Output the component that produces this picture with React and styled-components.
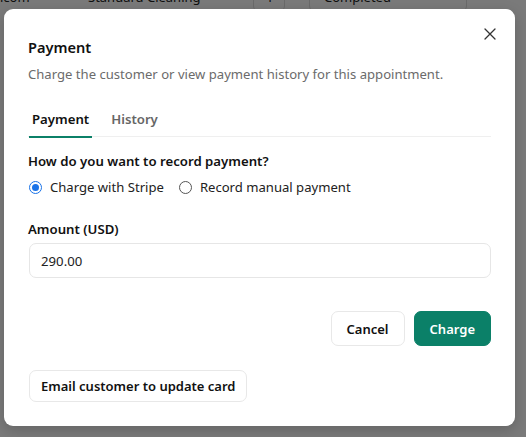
import React, { useState } from "react";
import styled, { createGlobalStyle } from "styled-components";

const Global = createGlobalStyle`
  html, body { margin: 0; padding: 0; }
  body {
    width: 526px; height: 437px; overflow: hidden;
    font-family: "Noto Sans", "Open Sans", sans-serif;
    background: #ffffff;
  }
  * { box-sizing: border-box; }
`;

const Page = styled.div`
  position: relative;
  width: 526px;
  height: 437px;
  overflow: hidden;
  background: #ffffff;
`;

const BgRow = styled.div`
  display: flex;
  align-items: center;
  height: 30px;
  margin-top: -18px;
  font-size: 13px;
  color: #222;
`;

const BgCell = styled.div`
  width: ${(p) => p.$w}px;
  flex: none;
  display: flex;
  align-items: center;
`;

const BgBox = styled.div`
  height: 30px;
  width: ${(p) => p.$w}px;
  border: 1px solid #ddd;
  border-radius: 6px;
  padding-left: ${(p) => p.$pad}px;
  display: flex;
  align-items: center;
`;

const Overlay = styled.div`
  position: absolute;
  inset: 0;
  background: rgba(0, 0, 0, 0.52);
`;

const Dialog = styled.div`
  position: absolute;
  left: 4px;
  top: 9px;
  width: 511px;
  height: 417px;
  background: #fff;
  border-radius: 9px;
  box-shadow: 0 4px 14px rgba(0, 0, 0, 0.18);
  padding: 26px 24px 24px 24px;
  display: flex;
  flex-direction: column;
`;

const Close = styled.button`
  position: absolute;
  top: 16px;
  right: 16px;
  width: 18px;
  height: 18px;
  border: 0;
  background: transparent;
  padding: 0;
  display: flex;
  align-items: center;
  justify-content: center;
  color: #333;
`;

const Title = styled.h2`
  margin: 0;
  font-size: 14.6px;
  line-height: 24px;
  font-weight: 600;
  color: #111;
`;

const Desc = styled.p`
  margin: 5px 0 0 0;
  font-size: 13.1px;
  line-height: 20px;
  color: #6b6b6b;
`;

const TabList = styled.div`
  display: flex;
  margin-top: 17px;
  border-bottom: 1px solid #efefef;
  height: 36px;
`;

const Tab = styled.button`
  border: 0;
  background: transparent;
  font-family: inherit;
  font-size: 13.2px;
  font-weight: 600;
  color: ${(p) => (p.$active ? "#111" : "#666")};
  padding: 0 3px;
  margin-bottom: -1px;
  height: 37px;
  border-bottom: 2px solid ${(p) => (p.$active ? "#0b8068" : "transparent")};
  margin-left: ${(p) => (p.$first ? "1px" : "16px")};
`;

const Question = styled.div`
  margin-top: 14px;
  font-size: 13.2px;
  line-height: 20px;
  font-weight: 600;
  color: #111;
`;

const RadioRow = styled.div`
  display: flex;
  gap: 14px;
  margin-top: 6px;
  height: 20px;
  align-items: center;
`;

const RadioLabel = styled.label`
  display: flex;
  align-items: center;
  gap: 8px;
  font-size: 13.1px;
  color: #222;
`;

const RadioDot = styled.span`
  width: 13px;
  height: 13px;
  border-radius: 50%;
  flex: none;
  margin-left: 1px;
  border: 1px solid ${(p) => (p.$checked ? "#1a73e8" : "#555")};
  display: flex;
  align-items: center;
  justify-content: center;
  &::after {
    content: "";
    width: 7px;
    height: 7px;
    border-radius: 50%;
    background: ${(p) => (p.$checked ? "#1a73e8" : "transparent")};
  }
`;

const FieldLabel = styled.div`
  margin-top: 22px;
  font-size: 13.2px;
  line-height: 20px;
  font-weight: 600;
  color: #111;
`;

const Input = styled.input`
  margin-top: 4px;
  height: 35px;
  width: 462px;
  margin-left: 1px;
  border: 1px solid #e6e6e6;
  border-radius: 7px;
  padding: 0 11px;
  font-family: inherit;
  font-size: 13.2px;
  color: #222;
  outline: none;
`;

const Actions = styled.div`
  display: flex;
  justify-content: flex-end;
  gap: 9px;
  margin-top: 33px;
`;

const Button = styled.button`
  height: 35px;
  padding: 0 15px;
  border-radius: 7px;
  font-family: inherit;
  font-size: 13px;
  font-weight: 600;
  border: 1px solid ${(p) => (p.$primary ? "#0b8068" : "#e8e8e8")};
  background: ${(p) => (p.$primary ? "#0b8068" : "#fff")};
  color: ${(p) => (p.$primary ? "#fff" : "#111")};
`;

const Footer = styled.div`
  display: flex;
  margin-top: 24px;
  padding-left: 1px;
`;

const SmallButton = styled(Button)`
  height: 32px;
  padding: 0 11px;
`;

function XIcon() {
  return (
    <svg width="12" height="12" viewBox="0 0 12 12" fill="none" stroke="currentColor" strokeWidth="1.3" strokeLinecap="round">
      <path d="M1 1L11 11M11 1L1 11" />
    </svg>
  );
}

export default function App() {
  const [tab, setTab] = useState("payment");
  const [mode, setMode] = useState("stripe");
  return (
    <Page>
      <Global />
      <BgRow>
        <BgCell $w={88}>icom</BgCell>
        <BgCell $w={165}>Standard Cleaning</BgCell>
        <BgCell $w={56}><BgBox $w={32} $pad={12}>1</BgBox></BgCell>
        <BgCell $w={170}><BgBox $w={158} $pad={14}>Completed</BgBox></BgCell>
      </BgRow>
      <Overlay />
      <Dialog role="dialog">
        <Close aria-label="Close"><XIcon /></Close>
        <Title>Payment</Title>
        <Desc>Charge the customer or view payment history for this appointment.</Desc>
        <TabList>
          <Tab $first $active={tab === "payment"} onClick={() => setTab("payment")}>Payment</Tab>
          <Tab $active={tab === "history"} onClick={() => setTab("history")}>History</Tab>
        </TabList>
        <Question>How do you want to record payment?</Question>
        <RadioRow>
          <RadioLabel onClick={() => setMode("stripe")}>
            <RadioDot $checked={mode === "stripe"} />
            Charge with Stripe
          </RadioLabel>
          <RadioLabel onClick={() => setMode("manual")}>
            <RadioDot $checked={mode === "manual"} />
            Record manual payment
          </RadioLabel>
        </RadioRow>
        <FieldLabel>Amount (USD)</FieldLabel>
        <Input defaultValue="290.00" />
        <Actions>
          <Button>Cancel</Button>
          <Button $primary>Charge</Button>
        </Actions>
        <Footer>
          <SmallButton>Email customer to update card</SmallButton>
        </Footer>
      </Dialog>
    </Page>
  );
}
